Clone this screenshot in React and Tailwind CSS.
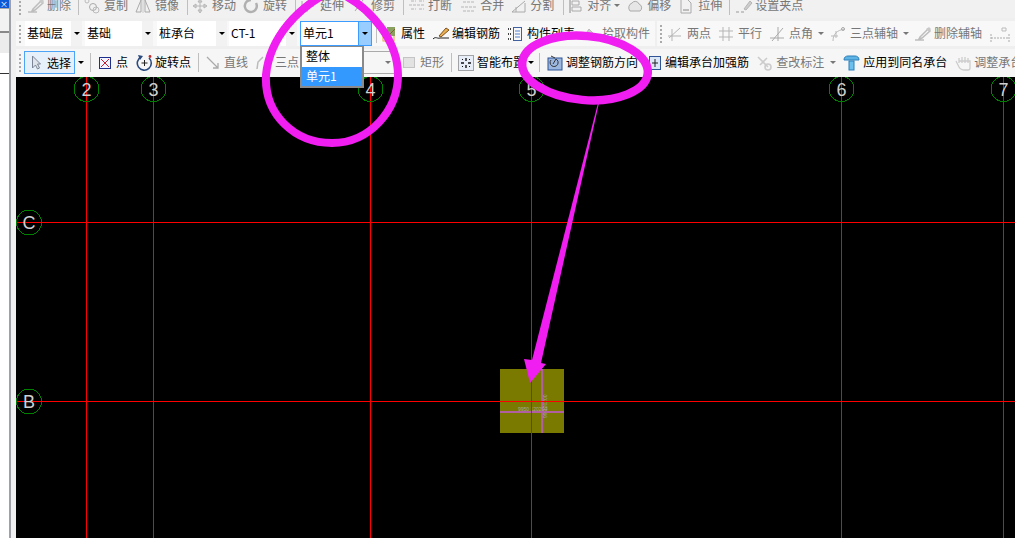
import React from 'react';
import clsx from 'clsx';

const FONT = '"Noto Sans CJK SC", "Liberation Sans", sans-serif';

const Svg = ({ w = 16, h = 16, children }) => (
    <svg width={w} height={h} viewBox={`0 0 ${w} ${h}`} className="shrink-0" fill="none">{children}</svg>
);

/* toolbar icons */
const IconBrush = () => <Svg w={18}><path d="M1 14h9M6 11l8-8 2 2-8 7-3 1z" stroke="#bdbdbd" strokeWidth="1.5" /><path d="M12 3l3-2 2 2-2 3z" fill="#c9c9c9" /></Svg>;
const IconCopy = () => <Svg><circle cx="3" cy="3" r="2" stroke="#bbb" /><circle cx="9" cy="9" r="3.5" stroke="#aaa" /><circle cx="12" cy="12" r="3" stroke="#bbb" /></Svg>;
const IconMirror = () => <Svg><path d="M1 14L6 2v12zM15 14L10 2v12z" stroke="#aaa" /><path d="M8 1v14" stroke="#ccc" /></Svg>;
const IconMove = () => <Svg><path d="M8 2v12M2 8h12M8 1L6 4h4zM8 15l-2-3h4zM1 8l3-2v4zM15 8l-3-2v4z" stroke="#b5b5b5" /></Svg>;
const IconRotate = () => <Svg><path d="M8 2a6 6 0 1 0 5 3" stroke="#b0b0b0" strokeWidth="2.5" /></Svg>;
const IconExtend = () => <Svg><path d="M2 3v11M7 3v11M7 8h7" stroke="#aaa" /></Svg>;
const IconTrim = () => <Svg><path d="M3 2l8 11M12 2L4 13" stroke="#aaa" /></Svg>;
const IconBreak = () => <Svg w={18}><path d="M3 3h5M11 3h5M3 11h5M11 11h5M1 7h16" stroke="#b5b5b5" strokeDasharray="3 1" /></Svg>;
const IconMerge = () => <Svg w={18}><path d="M3 4h12M1 9h16M3 13h12" stroke="#b5b5b5" strokeDasharray="3 1" /></Svg>;
const IconSplit = () => <Svg w={18}><path d="M2 14h13V5M2 14l13-11M6 14V9" stroke="#aaa" /></Svg>;
const IconAlign = () => <Svg><path d="M3 1v14" stroke="#888" /><path d="M5 3h7v4H5zM5 9h9v4H5z" stroke="#aaa" /></Svg>;
const IconOffset = () => <Svg><path d="M3 13a5 5 0 0 1 2-8 4 4 0 0 1 7 1 4 4 0 0 1 1 7z" stroke="#aaa" fill="#e6e6e6" /></Svg>;
const IconStretch = () => <Svg><path d="M3 1h6l4 4v10H3z" stroke="#aaa" /><path d="M5 12h6" stroke="#888" /></Svg>;
const IconGrip = () => <Svg w={18}><path d="M1 14h3M6 14h3" stroke="#999" /><path d="M9 11l6-8 2 2-6 7z" fill="#ccc" stroke="#b5b5b5" /></Svg>;

const IconProps = () => <Svg><rect x="1" y="4" width="11" height="11" stroke="#f0a040" /><path d="M5 1h8v9H5z" fill="#8aa060" /><path d="M4 12l9-9" stroke="#806030" /></Svg>;
const IconEditRebar = () => <Svg w={18}><path d="M1 13c3-3 4 0 7-1h9" stroke="#222" /><path d="M7 10l7-8 3 2-8 7z" fill="#e8b050" stroke="#805020" /></Svg>;
const IconList = () => <Svg><path d="M1 3h3M1 8h3M1 13h3" stroke="#444" strokeDasharray="1 1" strokeWidth="2" /><rect x="6.5" y="1.5" width="8" height="13" stroke="#4060a0" /><path d="M8 5h5M8 8h5M8 11h5" stroke="#5080d0" /></Svg>;
const IconPick = () => <Svg><path d="M2 14l6-6M7 3l6 6-3 2-5-5z" fill="#ccc" stroke="#bbb" /></Svg>;
const IconTwoPt = () => <Svg><path d="M2 12L13 2M5 15V3M1 10h13" stroke="#b5b5b5" /></Svg>;
const IconParallel = () => <Svg><path d="M1 5h14M1 11h14M5 1v14M11 1v14" stroke="#b5b5b5" /></Svg>;
const IconAngle = () => <Svg><path d="M1 12h14M3 15L14 2M9 1v14" stroke="#aaa" /></Svg>;
const IconThreePt = () => <Svg><path d="M3 15c0-7 4-11 12-12M1 10h7M6 5v7" stroke="#bbb" /><circle cx="13" cy="3" r="1.5" stroke="#aaa" /></Svg>;
const IconDim = () => <Svg w={20}><path d="M1 8v8M19 8v8M1 12h18" stroke="#aaa" strokeDasharray="2 1" /><path d="M12 2h4v3h-4z" stroke="#bbb" /></Svg>;

const IconCursor = () => <Svg w={10}><path d="M1.5 1v12l3-3 2 4 2-1-2-4h3z" fill="#dfe3ea" stroke="#7c8594" /></Svg>;
const IconPoint = () => <Svg w={12} h={12}><rect x=".5" y=".5" width="11" height="11" stroke="#1e2f8c" fill="#f4f4ff" /><path d="M2 2l8 8M10 2l-8 8" stroke="#c02030" /></Svg>;
const IconRotPoint = () => <Svg w={17} h={17}><path d="M5 3a7 7 0 1 0 8 1" stroke="#2a4a80" strokeWidth="1.6" /><path d="M2 1l5 1-3 4z" fill="#2a4a80" /><path d="M8.5 6v6M5.5 9h6" stroke="#222" /><circle cx="14" cy="2.5" r="1.4" fill="#c03030" /></Svg>;
const IconLine = () => <Svg w={14} h={14}><path d="M1 1l11 11M12 7v5H7" stroke="#aaa" strokeWidth="1.3" /></Svg>;
const IconArc = () => <Svg w={10}><path d="M2 14l1-7 5-5" stroke="#bbb" strokeWidth="1.5" /></Svg>;
const IconRect = () => <Svg w={12} h={11}><rect x=".5" y=".5" width="11" height="10" fill="#e2e2e2" stroke="#c4c4c4" /></Svg>;
const IconSmart = () => <Svg><rect x=".5" y=".5" width="15" height="15" stroke="#555" strokeDasharray="1 1" fill="#e8eef8" /><path d="M8 3v3M8 10v3M3 8h3M10 8h3" stroke="#111" strokeWidth="1.4" /><path d="M4 4l1 1M12 4l-1 1M4 12l1-1M12 12l-1-1" stroke="#111" /></Svg>;
const IconAdjust = () => <Svg><rect x="1" y="3" width="14" height="12" fill="#9cb8e0" stroke="#2f5597" /><path d="M4 5a4 4 0 1 0 5-1L6 9M4 1l4 2" stroke="#333" /></Svg>;
const IconEditCap = () => <Svg w={12}><rect x=".5" y="1.5" width="11" height="13" fill="#dbe6f6" stroke="#2f5597" /><path d="M3 8h6M6 4v8" stroke="#222" /></Svg>;
const IconCheck = () => <Svg><path d="M2 2l10 10M11 3l-7 7" stroke="#ccc" strokeWidth="1.6" /><circle cx="12" cy="12" r="3" stroke="#ccc" strokeWidth="1.6" /></Svg>;
const IconApply = () => <Svg w={17}><path d="M1 5c0-3 2-4 4-4h7c2 0 4 1 4 4z" fill="#5fb4e6" stroke="#2a7fb8" /><rect x="6" y="6" width="5" height="9" fill="#6cc0ee" stroke="#2a7fb8" /></Svg>;
const IconHand = () => <Svg w={17}><path d="M2 6l3 6c1 2 3 3 6 3h3c1 0 2-1 2-2V6H5M5 3v5M8 2v6M11 2v6M14 3v5" stroke="#ccc" strokeWidth="1.3" /></Svg>;

const Caret = ({ className, dim }) => (
    <span className={clsx('shrink-0 w-0 h-0 border-x-[3px] border-x-transparent border-t-[3px]', dim ? 'border-t-[#777]' : 'border-t-black', className)} />
);

const Grip = ({ className }) => (
    <div className={clsx('shrink-0 w-[2px] h-[18px] bg-[repeating-linear-gradient(to_bottom,#aaa_0,#aaa_2px,transparent_2px,transparent_4px)]', className)} />
);

const Sep = ({ className }) => <div className={clsx('shrink-0 w-px h-[19px] bg-[#bfbfbf]', className)} />;

const Tool = ({ icon, children, dim, className, gap = 'w-[20px]' }) => (
    <div className={clsx('flex items-center shrink-0 whitespace-nowrap', dim ? 'text-[#777]' : 'text-black', className)}>
        <div className={clsx('shrink-0 flex items-center', gap)}>{icon}</div>
        <span className="pb-[2px]">{children}</span>
    </div>
);

const Combo = ({ children, className }) => (
    <div className={clsx('h-[25px] bg-white flex items-center pl-[2px] shrink-0', className)}>
        <span className="flex-1 pb-[2px]">{children}</span>
        <div className="w-[11px] h-full bg-[#f2f2f2] flex items-center justify-center"><Caret /></div>
    </div>
);

const RowOne = () => (
    <div className="h-[18px] pb-[7px] flex items-center overflow-hidden bg-[#f1f1f1] text-[12px] leading-[12px]">
        <Grip className="ml-[3px]" />
        <Tool dim icon={<IconBrush />} className="ml-[6px]">删除</Tool>
        <Sep className="ml-[7px]" />
        <Tool dim icon={<IconCopy />} className="ml-[5px]">复制</Tool>
        <Tool dim icon={<IconMirror />} className="ml-[7px]">镜像</Tool>
        <Sep className="ml-[8px]" />
        <Tool dim icon={<IconMove />} className="ml-[4px]">移动</Tool>
        <Tool dim icon={<IconRotate />} className="ml-[7px]">旋转</Tool>
        <Sep className="ml-[8px]" />
        <Tool dim icon={<IconExtend />} className="ml-[4px]">延伸</Tool>
        <Tool dim icon={<IconTrim />} className="ml-[7px]">修剪</Tool>
        <Sep className="ml-[8px]" />
        <Tool dim icon={<IconBreak />} className="ml-[4px]">打断</Tool>
        <Tool dim icon={<IconMerge />} className="ml-[8px]">合并</Tool>
        <Tool dim icon={<IconSplit />} className="ml-[6px]">分割</Tool>
        <Sep className="ml-[9px]" />
        <Tool dim icon={<IconAlign />} className="ml-[3px]">对齐</Tool>
        <Caret dim className="ml-[3px]" />
        <Tool dim icon={<IconOffset />} className="ml-[7px]">偏移</Tool>
        <Tool dim icon={<IconStretch />} className="ml-[7px]">拉伸</Tool>
        <Sep className="ml-[7px]" />
        <Tool dim icon={<IconGrip />} className="ml-[5px]">设置夹点</Tool>
    </div>
);

const RowTwo = () => (
    <div className="h-[31px] py-[3px] flex items-center gap-[2px] bg-[#efefef] text-[12px] leading-[12px]">
        <div className="w-[639px] h-full bg-[#f8f8f8] flex items-center shrink-0">
            <Grip className="ml-[3px]" />
            <Combo className="ml-[4px] w-[57px]">基础层</Combo>
            <Combo className="ml-[3px] w-[68px]">基础</Combo>
            <Combo className="ml-[4px] w-[70px]">桩承台</Combo>
            <Combo className="ml-[2px] w-[68px]">CT-1</Combo>
            <div className="ml-[3px] w-[72px] h-[25px] shrink-0 bg-white border border-[#3c9cff] flex items-center pl-[2px]">
                <span className="flex-1 pb-[2px]">单元1</span>
                <div className="w-[13px] h-full bg-[#99ccff] border-l border-[#3c9cff] flex items-center justify-center"><Caret /></div>
            </div>
            <Sep className="ml-[4px]" />
            <Tool icon={<IconProps />} className="ml-[5px]" gap="w-[19px]">属性</Tool>
            <Tool icon={<IconEditRebar />} className="ml-[7px]">编辑钢筋</Tool>
            <Tool icon={<IconList />} className="ml-[7px]">构件列表</Tool>
            <Tool dim icon={<IconPick />} className="ml-[7px]">拾取构件</Tool>
        </div>
        <div className="flex-1 h-full bg-[#f8f8f8] flex items-center overflow-hidden">
            <Grip className="ml-[3px]" />
            <Tool dim icon={<IconTwoPt />} className="ml-[5px]">两点</Tool>
            <Tool dim icon={<IconParallel />} className="ml-[7px]">平行</Tool>
            <Tool dim icon={<IconAngle />} className="ml-[7px]">点角</Tool>
            <Caret dim className="ml-[5px]" />
            <Tool dim icon={<IconThreePt />} className="ml-[6px]">三点辅轴</Tool>
            <Caret dim className="ml-[5px]" />
            <Tool dim icon={<IconBrush />} className="ml-[5px]">删除辅轴</Tool>
            <div className="ml-[8px] shrink-0"><IconDim /></div>
        </div>
    </div>
);

const RowThree = () => (
    <div className="h-[28px] pb-[1px] flex items-center overflow-hidden bg-[#f6f6f6] text-[12px] leading-[12px]">
        <Grip className="ml-[3px]" />
        <div className="ml-[3px] w-[51px] h-[23px] shrink-0 flex items-center border border-[#4da3f5] bg-[#e6f0fb] pl-[6px]">
            <div className="w-[16px] shrink-0"><IconCursor /></div>
            <span>选择</span>
        </div>
        <Caret className="ml-[3px]" />
        <Sep className="ml-[6px]" />
        <Tool icon={<IconPoint />} className="ml-[8px]" gap="w-[17px]">点</Tool>
        <Tool icon={<IconRotPoint />} className="ml-[8px]" gap="w-[19px]">旋转点</Tool>
        <Sep className="ml-[7px]" />
        <Tool dim icon={<IconLine />} className="ml-[7px]" gap="w-[18px]">直线</Tool>
        <Tool dim icon={<IconArc />} className="ml-[7px]" gap="w-[20px]">三点</Tool>
        <div className="ml-[1px] w-[95px] h-[23px] shrink-0 border border-[#aaa] border-l-0 bg-[#f6f6f6] flex items-center justify-end pr-[3px]"><Caret dim /></div>
        <Tool dim icon={<IconRect />} className="ml-[8px]" gap="w-[17px]">矩形</Tool>
        <Sep className="ml-[7px]" />
        <Tool icon={<IconSmart />} className="ml-[6px]" gap="w-[19px]">智能布置</Tool>
        <Caret className="ml-[3px]" />
        <Sep className="ml-[5px]" />
        <Tool icon={<IconAdjust />} className="ml-[7px]" gap="w-[19px]">调整钢筋方向</Tool>
        <Tool icon={<IconEditCap />} className="ml-[11px]" gap="w-[16px]">编辑承台加强筋</Tool>
        <Tool dim icon={<IconCheck />} className="ml-[7px]">查改标注</Tool>
        <Caret dim className="ml-[6px]" />
        <Tool icon={<IconApply />} className="ml-[7px]">应用到同名承台</Tool>
        <Tool dim icon={<IconHand />} className="ml-[7px]">调整承台</Tool>
    </div>
);

const AXES_V = [
    { x: 86, label: '2' },
    { x: 153, label: '3' },
    { x: 370, label: '4' },
    { x: 531, label: '5' },
    { x: 841, label: '6' },
    { x: 1003, label: '7' },
];
const AXES_H = [
    { y: 222, label: 'C' },
    { y: 401, label: 'B' },
];

const Bubble = ({ cx, cy, label }) => (
    <g>
        <circle cx={cx} cy={cy} r="12.5" stroke="#008000" strokeWidth="1" fill="none" shapeRendering="crispEdges" />
        <text x={cx} y={cy + 6.5} textAnchor="middle" fontSize="18" fontFamily='"Liberation Sans", sans-serif' fill="#d0d0d0">{label}</text>
    </g>
);

// drawing area, coordinates are the page's own
const Drawing = () => (
    <svg viewBox="16 77 999 461" className="block w-full h-full">
        <rect x="500" y="369" width="64" height="64" fill="#7a7a00" />
        <rect x="541" y="369" width="2" height="64" fill="#b060a0" />
        <rect x="500" y="411" width="64" height="2" fill="#b060a0" />
        <text x="518" y="411" fontSize="5" fontFamily='"Liberation Sans", sans-serif' fill="#a8a8a0">9950 120200</text>
        <text x="0" y="0" fontSize="5" fontFamily='"Liberation Sans", sans-serif' fill="#a8a8a0" transform="translate(547 418) rotate(-90)">99 120200</text>
        {AXES_V.map((a) => <path key={a.x} d={`M${a.x + 0.5} 77V538`} stroke="#ff0000" />)}
        {AXES_H.map((a) => <path key={a.y} d={`M17 ${a.y + 0.5}H1015`} stroke="#ff0000" />)}
        {AXES_V.map((a) => <Bubble key={a.label} cx={a.x + 0.5} cy={89} label={a.label} />)}
        {AXES_H.map((a) => <Bubble key={a.label} cx={29} cy={a.y + 0.5} label={a.label} />)}
    </svg>
);

// hand-drawn marks lying over the whole screenshot
const Annotations = () => (
    <svg viewBox="0 0 1015 538" className="absolute inset-0 w-full h-full pointer-events-none">
        <path d="M325 -6C300 8 270 35 266 75C264 115 295 143 332 143C370 143 398 110 398 75C398 40 370 8 342 -6" fill="none" stroke="#f01ef0" strokeWidth="8" />
        <ellipse cx="585" cy="68" rx="63" ry="32" fill="none" stroke="#f01ef0" strokeWidth="8.5" transform="rotate(5 585 68)" />
        <polygon points="598,103 599,103 541,363 546,364 530,383 524,359 532,360" fill="#f01ef0" />
    </svg>
);

const Dropdown = () => (
    <div className="absolute left-[300px] top-[46px] w-[64px] h-[42px] bg-white border-2 border-[#8a8a8a] border-t text-[12px] leading-[18px] text-black flex flex-col">
        <div className="h-[20px] pl-[4px]">整体</div>
        <div className="h-[19px] pl-[4px] bg-[#3399ff] text-white">单元1</div>
    </div>
);

const LeftStrip = () => (
    <div className="w-[16px] h-full shrink-0 bg-[#f0f0f0] flex">
        <div className="w-[11px] h-full border-r-2 border-[#a0a0a8] bg-white flex flex-col">
            <div className="h-[8px] bg-[#0a5ad8] text-white text-[8px] leading-[8px] overflow-hidden">×</div>
            <div className="h-[25px] bg-[#f2f2f2] border-t border-[#aaa] border-b-2 border-b-[#888]" />
            <div className="h-[20px] bg-[#ececec]" />
            <div className="h-[21px] bg-white border-b border-[#333]" />
            <div className="flex-1 bg-white" />
        </div>
    </div>
);

export default function App() {
    return (
        <div className="relative w-[1015px] h-[538px] overflow-hidden flex bg-[#f0f0f0]" style={{ fontFamily: FONT }}>
            <LeftStrip />
            <div className="flex-1 min-w-0 flex flex-col">
                <RowOne />
                <RowTwo />
                <RowThree />
                <div className="flex-1 min-h-0 bg-black">
                    <Drawing />
                </div>
            </div>
            <Dropdown />
            <Annotations />
        </div>
    );
}
